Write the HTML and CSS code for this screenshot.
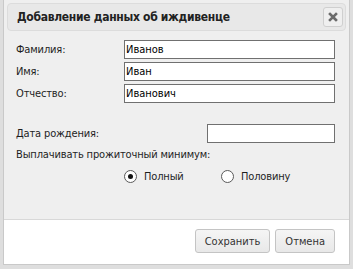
FILE: index.html
```html
<!DOCTYPE html>
<html lang="ru">
<head>
<meta charset="utf-8">
<link rel="stylesheet" href="styles.css">
</head>
<body>
<div class="dialog">
  <div class="header">
    <span class="title">Добавление данных об иждивенце</span>
    <button class="close" type="button" aria-label="Закрыть">
      <svg width="10" height="10" viewBox="0 0 10 10"><path d="M2 2 L8 8 M8 2 L2 8" stroke="#6b6b6b" stroke-width="2.6" stroke-linecap="square"/></svg>
    </button>
  </div>
  <div class="body">
    <div class="row"><label class="lbl">Фамилия:</label><input class="inp" value="Иванов"></div>
    <div class="row"><label class="lbl">Имя:</label><input class="inp" value="Иван"></div>
    <div class="row"><label class="lbl">Отчество:</label><input class="inp" value="Иванович"></div>
    <div class="row date"><label class="lbl">Дата рождения:</label><input class="inp short" value=""></div>
    <div class="pay">Выплачивать прожиточный минимум:</div>
    <div class="radios">
      <div class="radio"><span class="circle on"></span><span>Полный</span></div>
      <div class="radio"><span class="circle"></span><span>Половину</span></div>
    </div>
  </div>
  <div class="footer">
    <button class="btn" type="button">Сохранить</button>
    <button class="btn" type="button">Отмена</button>
  </div>
</div>
</body>
</html>
```
FILE: styles.css
```css
html, body {
  margin: 0;
  padding: 0;
}
body {
  background: #dedede;
  width: 353px;
  height: 269px;
  font-family: "DejaVu Sans Condensed", "Liberation Sans", Arial, sans-serif;
  font-size: 11px;
  color: #1e1e1e;
  overflow: hidden;
}
.dialog {
  margin: 0 3px;
  width: 345px;
  height: 264px;
  border: 1px solid #c9c9c9;
  border-top: none;
  background: #efefef;
  display: flex;
  flex-direction: column;
}
.header {
  margin: 3px 3px 0 3px;
  height: 26px;
  border: 1px solid #dcdcdc;
  border-radius: 4px;
  background: #e8e8e8;
  display: flex;
  align-items: center;
  justify-content: space-between;
  padding: 0 2px 0 9px;
}
.title {
  font-weight: bold;
  font-size: 12px;
  letter-spacing: -0.3px;
  color: #222;
}
.close {
  width: 20px;
  height: 20px;
  border: 1px solid #cfcfcf;
  border-radius: 3px;
  background: #efefef;
  padding: 0;
  display: flex;
  align-items: center;
  justify-content: center;
}
.body {
  flex: 1;
  padding: 9px 14px 0 12px;
  letter-spacing: -0.15px;
}
.row {
  display: flex;
  align-items: center;
  height: 19px;
  margin-bottom: 3px;
}
.lbl {
  width: 108px;
  flex: none;
}
.inp {
  width: 211px;
  height: 19px;
  box-sizing: border-box;
  border: 1px solid #707070;
  background: #fff;
  margin: 0;
  padding: 0 1px;
  font-family: "DejaVu Sans Condensed", "Liberation Sans", Arial, sans-serif;
  font-size: 11px;
  color: #000;
  outline: none;
}
.row.date {
  margin-top: 21px;
  justify-content: space-between;
}
.inp.short {
  width: 128px;
}
.pay {
  height: 17px;
  line-height: 17px;
}
.radios {
  display: grid;
  grid-template-columns: 97px 97px;
  margin: 5px 0 0 108px;
  height: 16px;
  align-items: center;
}
.radio {
  display: flex;
  align-items: center;
}
.circle {
  flex: none;
  width: 11px;
  height: 11px;
  border: 1px solid #5a5a5a;
  border-radius: 50%;
  background: #fff;
  margin-right: 7px;
  display: flex;
  align-items: center;
  justify-content: center;
}
.circle.on::after {
  content: "";
  width: 5px;
  height: 5px;
  border-radius: 50%;
  background: #111;
}
.footer {
  height: 45px;
  background: #fff;
  border-top: 1px solid #d8d8d8;
  display: flex;
  justify-content: flex-end;
  align-items: flex-start;
  padding: 9px 14px 0 0;
  gap: 5px;
  box-sizing: border-box;
}
.btn {
  height: 24px;
  border: 1px solid #c4c4c4;
  border-radius: 3px;
  background: linear-gradient(#f5f5f5, #e8e8e8);
  font-family: "DejaVu Sans Condensed", "Liberation Sans", Arial, sans-serif;
  font-size: 11px;
  color: #333;
  padding: 0 9px;
}
```
